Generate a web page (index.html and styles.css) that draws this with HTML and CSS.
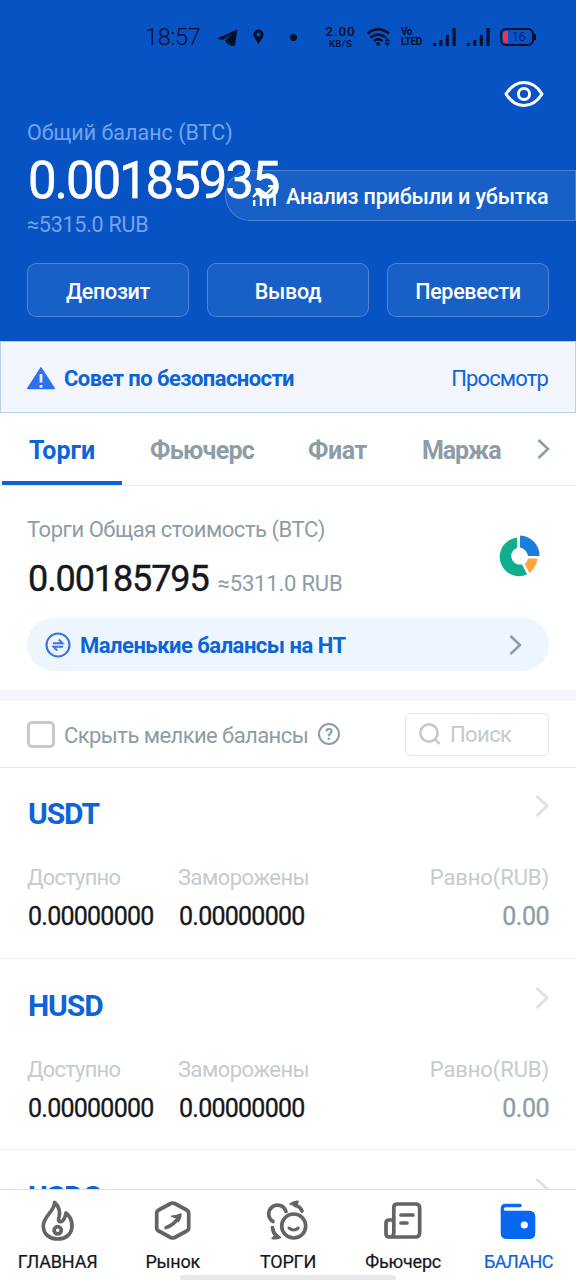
FILE: index.html
```html
<!DOCTYPE html>
<html lang="ru">
<head>
<meta charset="utf-8">
<title>Баланс</title>
<link rel="stylesheet" href="styles.css">
</head>
<body>
<div class="app">
  <header class="hero">
    <div class="status">
      <span class="clock">18:57</span>
      <svg class="st-tg" width="21" height="19" viewBox="0 0 21 19"><path d="M.3 10.500 20.300 1.500 18 17.500 14.500 18 9.800 15.200 8 12.300 15.500 6.200 5.500 12Z"/></svg>
      <svg class="st-pin" width="11" height="16" viewBox="0 0 11 16"><path fill-rule="evenodd" d="M5.500.5a5 5 0 0 1 5 5C10.500 9 6.500 12 5.500 15.500 4.500 12 .5 9 .5 5.500a5 5 0 0 1 5-5Zm0 3a2 2 0 1 0 0 4 2 2 0 0 0 0-4Z"/></svg>
      <i class="st-dot"></i>
      <span class="speed"><b>2.00</b><b class="unit">KB/S</b></span>
      <svg class="st-wifi" width="26" height="20" viewBox="0 0 26 20"><g fill="none" stroke="#000f2c" stroke-width="2.500"><path d="M1.500 6.500Q12 -2 23 6.500"/><path d="M4.500 10.500Q12 4.500 20 10.500"/><path d="M8 14Q12 10.500 16.500 14"/></g><circle cx="12.200" cy="17" r="1.900"/><path d="M18.500 14.300 21.300 11 24 14.300ZM18.500 15.800H24L21.300 19Z"/></svg>
      <span class="volte"><b>Vo</b><b>LTE<i>D</i></b></span>
      <svg class="st-sig" width="24" height="20" viewBox="0 0 24 20"><path d="M0 16h3v3H0ZM6.300 13h3v6h-3ZM12.800 8h3v11h-3ZM19.500 1h3.200v18h-3.200Z"/></svg>
      <svg class="st-sig2" width="24" height="20" viewBox="0 0 24 20"><path d="M0 16h3v3H0ZM6.300 13h3v6h-3ZM12.800 8h3v11h-3ZM19.500 1h3.200v18h-3.200Z"/></svg>
      <span class="battery"><i class="level"></i>16</span>
    </div>
    <div class="eye"><svg width="40" height="28" viewBox="0 0 40 28" fill="none" stroke="#fff" stroke-width="3"><path d="M2 14C7 6 13 2.500 20 2.500S33 6 38 14C33 22 27 25.500 20 25.500S7 22 2 14Z" stroke-linejoin="round"/><circle cx="20" cy="14" r="5.600"/></svg></div>
    <div class="total-label">Общий баланс (BTC)</div>
    <div class="total">0.00185935</div>
    <div class="total-fiat">≈5315.0 RUB</div>
    <a class="analysis"><svg width="25" height="22" viewBox="0 0 25 22" fill="none" stroke="#fff" stroke-width="2.400"><path d="M1 12 8 5l6 4 8-8M16 1h6v6M2.200 15v6M9 12v9M15.800 14v7M22.500 11v10"/></svg><span>Анализ прибыли и убытка</span></a>
    <div class="actions"><a><span>Депозит</span></a><a><span>Вывод</span></a><a><span>Перевести</span></a></div>
  </header>
  <section class="notice">
    <svg width="28" height="23" viewBox="0 0 28 23"><path d="M14 .8 27.200 21.500H.8Z" fill="#2f6ff0" stroke="#2f6ff0" stroke-width="1.500" stroke-linejoin="round"/><path d="M14 7v8.500M14 18v2.800" stroke="#e8efff" stroke-width="2.800"/></svg>
    <span class="notice-title">Совет по безопасности</span><a class="notice-link">Просмотр</a>
  </section>
  <nav class="tabs">
    <a class="tab on t1"><span>Торги</span></a><a class="tab t2">Фьючерс</a><a class="tab t3">Фиат</a><a class="tab t4">Маржа</a>
    <svg width="13" height="20" viewBox="0 0 13 20" fill="none" stroke="#8d9da6" stroke-width="2.600"><path d="M1.500 1 11 10 1.500 19"/></svg>
  </nav>
  <section class="summary">
    <div class="sum-label">Торги Общая стоимость (BTC)</div>
    <div class="sum-line"><span class="sum-value">0.00185795</span><span class="sum-fiat">≈5311.0 RUB</span></div>
    <svg class="donut" width="42" height="42" viewBox="0 0 42 42"><path fill="#0faf8d" d="M18 2.500V13A8.500 8.500 0 0 0 20 29.500Q22 29.700 23 29.200L28 39.500A19.400 19.400 0 1 1 18 2.500Z"/><path fill="#1c7edc" d="M21 .5A20 20 0 0 1 40.500 21H29Q27.500 14 21 12.500Z"/><path fill="#fba53c" d="M29 23.500H38.500Q37.500 32 30.500 38L25.500 29Q28.500 27 29 23.500Z"/></svg>
    <a class="small">
      <svg width="26" height="26" viewBox="0 0 26 26" fill="none" stroke="#3b72df" stroke-width="2.100"><circle cx="13" cy="13" r="11.500"/><path d="M8 11.200H17.500L13.800 7.500M18 14.800H8.500L12.200 18.500" stroke-width="1.900"/></svg>
      <span>Маленькие балансы на HT</span>
      <svg class="arr" width="13" height="20" viewBox="0 0 13 20" fill="none" stroke="#8d9da6" stroke-width="2.500"><path d="M1.500 1 11 10 1.500 19"/></svg>
    </a>
  </section>
  <section class="filter">
    <i class="check"></i><span class="hide">Скрыть мелкие балансы</span><span class="help">?</span>
    <div class="search"><svg width="22" height="22" viewBox="0 0 22 22" fill="none" stroke="#c4cacd" stroke-width="2.600"><circle cx="10" cy="10" r="8.600"/><path d="m16 16 4.500 5"/></svg><span>Поиск</span></div>
  </section>
  <main>
    <article class="coin">
      <h2 class="usdt">USDT</h2><svg width="14" height="22" viewBox="0 0 14 22" fill="none" stroke="#dfe2e4" stroke-width="3"><path d="M1.500 1 12 11 1.500 21"/></svg>
      <dl><div><dt class="av">Доступно</dt><dd>0.00000000</dd></div><div><dt class="fr">Заморожены</dt><dd>0.00000000</dd></div><div class="eq"><dt>Равно(RUB)</dt><dd>0.00</dd></div></dl>
    </article>
    <article class="coin">
      <h2 class="husd">HUSD</h2><svg width="14" height="22" viewBox="0 0 14 22" fill="none" stroke="#dfe2e4" stroke-width="3"><path d="M1.500 1 12 11 1.500 21"/></svg>
      <dl><div><dt class="av">Доступно</dt><dd>0.00000000</dd></div><div><dt class="fr">Заморожены</dt><dd>0.00000000</dd></div><div class="eq"><dt>Равно(RUB)</dt><dd>0.00</dd></div></dl>
    </article>
    <article class="coin">
      <h2 class="usdc">USDC</h2><svg width="14" height="22" viewBox="0 0 14 22" fill="none" stroke="#dfe2e4" stroke-width="3"><path d="M1.500 1 12 11 1.500 21"/></svg>
    </article>
  </main>
  <footer class="bottom">
    <a><svg width="44" height="44" viewBox="0 0 44 44"><path d="M18.500 2.500C19 11 7.300 16 7.300 26C7.300 34 13.500 39 21.700 39S36 34 36 26C36 21 34 16 30 13C29.500 16 28.500 19 26.500 20.800C24.500 22.500 21.500 22 23 17C24.500 11 22.500 6 18.500 2.500Z"/><circle cx="21.700" cy="30.300" r="3.600"/></svg><span class="n1">ГЛАВНАЯ</span></a>
    <a><svg width="44" height="44" viewBox="0 0 44 44"><path d="M19.700 3.500Q21.700 2.500 23.700 3.500L35.700 10Q37.700 11 37.700 13.500V28Q37.700 30 35.700 31L23.700 37.500Q21.700 38.500 19.700 37.500L7.700 31Q5.700 30 5.700 28V13.500Q5.700 11 7.700 10Z"/><path d="M15 27.700Q23 25 28 17" stroke-width="3.500"/><path d="M20.500 16.300Q26 16 30 14Q30.300 18 27.500 21.500L26 18Z" fill="#626568" stroke-width="1.500"/></svg><span class="n2">Рынок</span></a>
    <a><svg width="44" height="44" viewBox="0 0 44 44"><circle cx="27.700" cy="26" r="12"/><path d="M23 28Q27.700 32 32.300 28" stroke-width="3"/><path d="M7 21.500A8.800 8.800 0 1 1 20 11.500M6.500 27.500Q7 32.500 10 35.500M29 5.500Q34 6 36 11"/><path d="M10.500 34 14.500 37.500Q10 39.500 6 38.500ZM24 4Q28 1 32 1.300L31 6Z" fill="#626568" stroke-width="1.500"/></svg><span class="n3">ТОРГИ</span></a>
    <a><svg width="44" height="44" viewBox="0 0 44 44"><path d="M12.800 33V7.500Q12.800 4 16.500 4H34.500Q38.700 4 38.700 8V32.500Q38.700 37 34.500 37H8Q5 37 5 33.500V23Q5 20 8 20H12.800V33Q12.800 37 9 37M20 15H32M20 23H26"/></svg><span class="n4">Фьючерс</span></a>
    <a class="on"><svg width="44" height="44" viewBox="0 0 44 44"><path class="wallet" d="M10 3.700H24A1.700 1.700 0 0 1 24 7.200H9.500A1.500 1.500 0 0 0 9.500 10.700H33Q39.300 10.700 39.300 17V32.700Q39.300 39 33 39H11Q4.700 39 4.700 32.700V8.700Q4.700 3.700 10 3.700Z"/><circle class="clasp" cx="28.300" cy="25" r="3.600"/></svg><span class="n5">БАЛАНС</span></a>
    <i class="home"></i>
  </footer>
</div>
</body>
</html>
```
FILE: styles.css
```css
* { box-sizing: border-box; }
body { margin: 0; background: #fff; font-family: Roboto, "Liberation Sans", sans-serif; }
.app { width: 576px; height: 1280px; overflow: hidden; display: flex; flex-direction: column; position: relative; color: #15181c; }
svg { display: block; flex: none; }
span { white-space: nowrap; }
.hero { height: 341px; flex: none; background: #0853c4; position: relative; padding: 0 27px; color: #fff; }
.status { height: 74px; margin-left: 118px; display: flex; align-items: center; color: #000f2c; fill: #000f2c; }
.clock { width: 72px; font-size: 23.500px; font-weight: 300; letter-spacing: -.3px; }
.st-pin { margin-left: 15px; }
.st-dot { width: 7px; height: 7px; border-radius: 50%; background: #000f2c; margin-left: 26px; }
.speed { width: 33px; margin-left: 27px; display: flex; flex-direction: column; align-items: center; font-size: 13.500px; line-height: 13px; letter-spacing: .9px; }
.speed b { font-weight: 500; }
.speed .unit { font-size: 9.500px; line-height: 12px; letter-spacing: .4px; }
.st-wifi { margin-left: 9px; }
.volte { width: 22px; margin-left: 9px; display: flex; flex-direction: column; font-size: 10px; line-height: 10px; letter-spacing: -.5px; }
.volte b { font-weight: 700; }
.volte i { font-style: normal; }
.st-sig { margin-left: 10px; }
.st-sig2 { margin-left: 10px; }
.battery { margin-left: 9px; width: 34px; height: 18px; border: 2px solid #000f2c; border-radius: 6px; display: flex; align-items: center; gap: 4px; font-size: 12px; font-weight: 300; padding-left: 1px; position: relative; }
.battery::after { content: ""; position: absolute; right: -4px; top: 4px; width: 2px; height: 6px; background: #000f2c; }
.level { width: 5px; height: 12px; border-radius: 3px 1px 1px 3px; background: #e8364f; }
.eye { height: 46px; display: flex; justify-content: flex-end; padding: 6px 5px 0 0; }
.total-label { height: 32px; font-size: 21.500px; line-height: 25px; color: #73a3ee; }
.total { height: 60px; padding-left: 1px; font-size: 51px; line-height: 57px; letter-spacing: -2.100px; -webkit-text-stroke: .5px #fff; }
.total-fiat { height: 51px; font-size: 21.500px; line-height: 26px; letter-spacing: -.25px; color: #73a3ee; }
.analysis { position: absolute; right: 0; top: 170px; width: 351px; height: 51px; border: 1px solid rgba(255,255,255,.22); border-radius: 26px 0 0 26px; background: rgba(255,255,255,.07); display: flex; align-items: center; padding: 1px 0 0 26px; gap: 9px; font-size: 21.500px; font-weight: 500; letter-spacing: -.18px; }
.actions { display: grid; grid-template-columns: repeat(3, 162px); justify-content: space-between; }
.actions a { height: 54px; border: 1px solid rgba(255,255,255,.22); border-radius: 9px; background: rgba(255,255,255,.07); display: flex; align-items: center; justify-content: center; font-size: 21.500px; font-weight: 500; letter-spacing: -.3px; padding-top: 2px; }
.notice { height: 72px; flex: none; border: 1px solid #b9d0ea; background: #f3f6fe; display: flex; align-items: center; padding: 2px 26px 0; font-size: 22px; color: #0c64d8; }
.notice-title { margin-left: 9px; font-weight: 700; letter-spacing: -.57px; }
.notice-link { margin-left: auto; margin-right: 1px; letter-spacing: -.85px; }
.tabs { height: 73px; flex: none; border-bottom: 1px solid #e9eced; display: flex; align-items: center; color: #8d9da6; font-size: 25px; font-weight: 700; letter-spacing: -.7px; }
.tab { padding-top: 2px; }
.t1 { width: 120px; height: 72px; margin: 0 0 0 2px; border-bottom: 4px solid #0c64d8; color: #0c64d8; display: flex; align-items: center; justify-content: center; padding-top: 7px; letter-spacing: 0; }
.t2 { width: 158px; margin-left: 28px; }
.t3 { width: 114px; letter-spacing: -.4px; }
.t4 { width: 115px; letter-spacing: -1.100px; }
.summary { height: 204px; flex: none; padding: 30px 27px 0; position: relative; }
.sum-label { height: 40px; font-size: 22px; line-height: 28px; letter-spacing: -.45px; color: #8d9da6; }
.sum-line { height: 62px; display: flex; align-items: baseline; gap: 9px; line-height: 47px; padding-left: 1px; }
.sum-value { font-size: 36px; letter-spacing: -1.100px; -webkit-text-stroke: .4px #15181c; }
.sum-fiat { font-size: 22px; letter-spacing: -.2px; color: #8d9da6; }
.donut { position: absolute; left: 499px; top: 49px; }
.small { height: 53px; border-radius: 27px; background: #edf5fe; display: flex; align-items: center; padding: 1px 27px 0 18px; gap: 9px; color: #0c64d8; font-size: 22px; font-weight: 700; letter-spacing: -.5px; }
.arr { margin-left: auto; }
.filter { height: 78px; flex: none; border-top: 11px solid #f5f6fc; border-bottom: 1px solid #e3e7e9; display: flex; align-items: center; padding: 0 27px; color: #8d9da6; font-size: 22px; }
.check { width: 28px; height: 27px; border: 3px solid #c4cacd; border-radius: 5px; }
.hide { margin-left: 9px; width: 244px; padding-top: 2px; letter-spacing: -.57px; }
.help { width: 22px; height: 22px; border: 2px solid #8d9da6; border-radius: 50%; margin-left: 10px; font-size: 16px; font-weight: 700; line-height: 19px; text-align: center; }
.search { margin-left: auto; width: 144px; height: 43px; border: 1px solid #e3e7e9; border-radius: 5px; display: flex; align-items: center; gap: 9px; padding-left: 13px; color: #c4cacd; letter-spacing: -.6px; }
main { margin-top: -.7px; }
.coin { height: 191.500px; border-bottom: 1px solid #eef0f1; padding: 28px 27px 0; display: grid; grid-template-columns: 1fr auto; align-content: start; }
.coin h2 { margin: 0; height: 68px; padding-left: 1px; font-size: 30px; line-height: 38px; letter-spacing: -1.100px; color: #0c64d8; }
dl { grid-column: 1 / 3; margin: 0; display: grid; grid-template-columns: 151px 170px 1fr; }
dt { font-size: 22px; line-height: 30px; letter-spacing: -.1px; color: #c6cbce; }
.av { letter-spacing: -.8px; }
.fr { letter-spacing: -.55px; }
dd { margin: 9px 0 0; padding-left: 1px; font-size: 25px; line-height: 30px; letter-spacing: -.75px; -webkit-text-stroke: .3px currentColor; }
.eq { display: flex; flex-direction: column; align-items: flex-end; }
.eq dd { color: #8d9da6; letter-spacing: -.5px; }
.bottom { position: absolute; left: 0; right: 0; bottom: 0; height: 91px; border-top: 1px solid #e0e2e3; background: #fff; display: grid; grid-template-columns: repeat(5, 1fr); }
.bottom a { display: flex; flex-direction: column; align-items: center; padding-top: 10px; font-size: 18px; -webkit-text-stroke: .2px currentColor; }
.bottom svg { fill: none; stroke: #626568; stroke-width: 3.700; stroke-linecap: round; stroke-linejoin: round; }
.bottom span { margin-top: 6px; line-height: 24px; letter-spacing: -.2px; }
.bottom .on { color: #0c64d8; }
.bottom .n5 { letter-spacing: -.6px; }
.bottom .wallet { fill: #0867f0; stroke: none; }
.bottom .clasp { fill: #fff; stroke: none; }
.home { position: absolute; left: 180px; bottom: 0; width: 216px; height: 5px; background: #e8e8e8; border-radius: 3px 3px 0 0; }
```
